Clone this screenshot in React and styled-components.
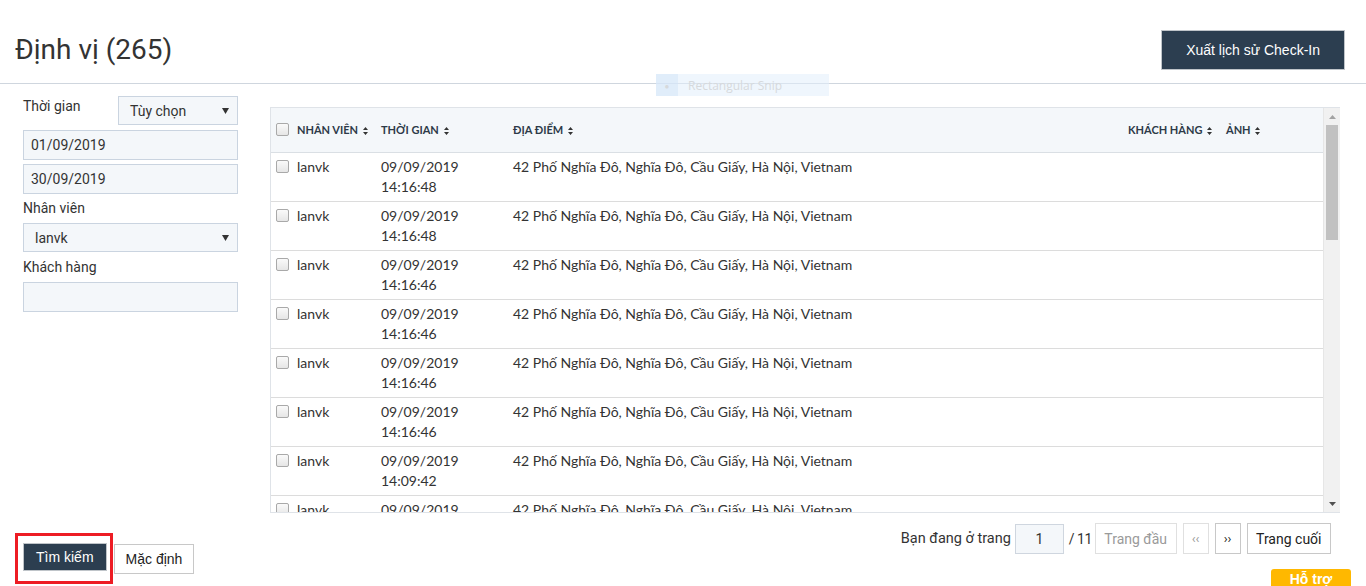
import React from "react";
import styled, { createGlobalStyle } from "styled-components";

const GlobalStyle = createGlobalStyle`
  * { box-sizing: border-box; }
  body {
    margin: 0;
    background: #fff;
    font-family: Roboto, "Liberation Sans", sans-serif;
    color: #333;
    overflow: hidden;
  }
`;

const rows = [
  "14:16:48",
  "14:16:48",
  "14:16:46",
  "14:16:46",
  "14:16:46",
  "14:16:46",
  "14:09:42",
  "14:09:40",
];

const SortIcon = () => (
  <SortSvg width="5" height="8" viewBox="0 0 5 8">
    <path d="M2.5 0 L5 3 L0 3 Z M2.5 8 L5 5 L0 5 Z" fill="#333" />
  </SortSvg>
);

const Caret = () => (
  <CaretSvg width="7" height="6" viewBox="0 0 7 6">
    <path d="M0 0 L7 0 L3.5 6 Z" fill="#333" />
  </CaretSvg>
);

const App = () => {
  return (
    <Page>
      <GlobalStyle />
      <Header>
        <Title>Định vị (265)</Title>
        <DarkButton $big>Xuất lịch sử Check-In</DarkButton>
      </Header>
      <SnipOverlay>
        <SnipDot>●</SnipDot>
        <span>Rectangular Snip</span>
      </SnipOverlay>

      <Body>
        <Sidebar>
          <Filters>
            <TimeRow>
              <Label>Thời gian</Label>
              <Select $width="120px" $pad="11px">
                Tùy chọn
                <Caret />
              </Select>
            </TimeRow>
            <Input>01/09/2019</Input>
            <Input>30/09/2019</Input>
            <Label>Nhân viên</Label>
            <Select $pad="11px">
              lanvk
              <Caret />
            </Select>
            <Label>Khách hàng</Label>
            <Input />
          </Filters>
          <Actions>
            <Highlight>
              <DarkButton>Tìm kiếm</DarkButton>
            </Highlight>
            <LightButton>Mặc định</LightButton>
          </Actions>
        </Sidebar>

        <Main>
          <TableBox>
            <TableScroll>
              <Table>
                <colgroup>
                  <col style={{ width: 26 }} />
                  <col style={{ width: 84 }} />
                  <col style={{ width: 132 }} />
                  <col style={{ width: 615 }} />
                  <col style={{ width: 98 }} />
                  <col />
                </colgroup>
                <thead>
                  <tr>
                    <Th>
                      <Check />
                    </Th>
                    <Th>NHÂN VIÊN <SortIcon /></Th>
                    <Th>THỜI GIAN <SortIcon /></Th>
                    <Th>ĐỊA ĐIỂM <SortIcon /></Th>
                    <Th>KHÁCH HÀNG <SortIcon /></Th>
                    <Th>ẢNH <SortIcon /></Th>
                  </tr>
                </thead>
                <tbody>
                  {rows.map((t, i) => (
                    <tr key={i}>
                      <Td>
                        <Check />
                      </Td>
                      <Td>lanvk</Td>
                      <Td>
                        09/09/2019
                        <br />
                        {t}
                      </Td>
                      <Td>42 Phố Nghĩa Đô, Nghĩa Đô, Cầu Giấy, Hà Nội, Vietnam</Td>
                      <Td />
                      <Td />
                    </tr>
                  ))}
                </tbody>
              </Table>
            </TableScroll>
            <Scrollbar>
              <ScrollArrow>
                <svg width="7" height="4" viewBox="0 0 7 4">
                  <path d="M3.5 0 L7 4 L0 4 Z" fill="#a3a3a3" />
                </svg>
              </ScrollArrow>
              <ScrollTrack>
                <Thumb />
              </ScrollTrack>
              <ScrollArrow>
                <svg width="7" height="4" viewBox="0 0 7 4">
                  <path d="M0 0 L7 0 L3.5 4 Z" fill="#505050" />
                </svg>
              </ScrollArrow>
            </Scrollbar>
          </TableBox>

          <Pager>
            <PagerText>Bạn đang ở trang</PagerText>
            <PageInput>1</PageInput>
            <PagerText $small>/ 11</PagerText>
            <PageButton $disabled $first>Trang đầu</PageButton>
            <PageButton $disabled $small>‹‹</PageButton>
            <PageButton $small>››</PageButton>
            <PageButton>Trang cuối</PageButton>
          </Pager>
        </Main>
      </Body>

      <Support>Hỗ trợ</Support>
    </Page>
  );
};

const Page = styled.div`
  position: relative;
  width: 1366px;
  height: 586px;
  overflow: hidden;
`;

const Header = styled.header`
  height: 84px;
  display: flex;
  align-items: flex-start;
  justify-content: space-between;
  padding: 0 21px 0 15px;
  border-bottom: 1px solid #cfd6de;
`;

const Title = styled.h1`
  margin: 33px 0 0;
  font-family: Roboto, sans-serif;
  font-weight: 400;
  font-size: 28px;
  line-height: 34px;
  color: #333;
`;

const DarkButton = styled.button`
  background: #2c3e50;
  color: #fff;
  border: 1px solid #bfc4c9;
  font-family: "Liberation Sans", Arial, sans-serif;
  font-size: 14px;
  height: ${(p) => (p.$big ? "40px" : "28px")};
  padding: ${(p) => (p.$big ? "0 24px" : "0 12px")};
  border-radius: 0;
  margin-top: ${(p) => (p.$big ? "30px" : "0")};
`;

const LightButton = styled.button`
  background: #fff;
  color: #222;
  border: 1px solid #c8c8c8;
  font-family: "Liberation Sans", Arial, sans-serif;
  font-size: 14px;
  height: 30px;
  padding: 0 11px;
  border-radius: 0;
`;

const SnipOverlay = styled.div`
  position: absolute;
  left: 656px;
  top: 74px;
  width: 173px;
  height: 22px;
  background: rgba(225, 238, 252, 0.55);
  display: flex;
  align-items: center;
  font-family: "Open Sans", sans-serif;
  font-size: 12px;
  color: #d6d9dc;
`;

const SnipDot = styled.span`
  width: 22px;
  height: 22px;
  display: flex;
  align-items: center;
  justify-content: center;
  background: rgba(210, 228, 248, 0.5);
  font-size: 8px;
  margin-right: 10px;
`;

const Body = styled.div`
  display: flex;
  padding-top: 12px;
`;

const Sidebar = styled.aside`
  width: 215px;
  margin-left: 23px;
  height: 488px;
  display: flex;
  flex-direction: column;
  justify-content: space-between;
`;

const Filters = styled.div`
  display: flex;
  flex-direction: column;
  gap: 5px;
`;

const TimeRow = styled.div`
  display: flex;
  justify-content: space-between;
  align-items: flex-start;
`;

const Label = styled.div`
  font-size: 14px;
  line-height: 20px;
  color: #333;
`;

const Field = styled.div`
  height: 30px;
  width: 100%;
  background: #f4f7fa;
  border: 1px solid #cad4e0;
  font-size: 14px;
  display: flex;
  align-items: center;
  color: #333;
`;

const Input = styled(Field)`
  padding-left: 7px;
  margin-bottom: -1px;
`;

const Select = styled(Field)`
  height: 29px;
  width: ${(p) => p.$width || "100%"};
  padding: 0 8px 0 ${(p) => p.$pad};
  justify-content: space-between;
`;

const CaretSvg = styled.svg`
  display: block;
`;

const Actions = styled.div`
  display: flex;
  align-items: center;
  margin-left: -8px;
  gap: 1px;
`;

const Highlight = styled.div`
  border: 3px solid #ed1c24;
  padding: 7px 3px 10px 5px;
  display: flex;
`;

const Main = styled.div`
  margin-left: 32px;
  width: 1070px;
  padding-top: 11px;
`;

const TableBox = styled.div`
  display: flex;
  height: 406px;
  border: 1px solid #dfe3e8;
  border-right: none;
  overflow: hidden;
`;

const TableScroll = styled.div`
  flex: 1;
  overflow: hidden;
`;

const Table = styled.table`
  width: 100%;
  table-layout: fixed;
  border-collapse: collapse;
  font-family: Lato, sans-serif;
`;

const Th = styled.th`
  height: 44px;
  background: #f4f7fa;
  text-align: left;
  font-size: 11px;
  font-weight: 700;
  color: #2d3a48;
  border-bottom: 1px solid #dadfe4;
  padding: 0;
  white-space: nowrap;
  &:first-child {
    padding-left: 5px;
  }
`;

const Td = styled.td`
  vertical-align: top;
  font-size: 14px;
  line-height: 20px;
  color: #333;
  padding: 4px 0;
  border-bottom: 1px solid #dcdcdc;
  &:first-child {
    padding-left: 5px;
    padding-top: 7px;
  }
`;

const Check = styled.span`
  display: block;
  width: 13px;
  height: 13px;
  border: 1px solid #a9a9a9;
  border-radius: 2px;
  background: linear-gradient(#fafafa, #e6e6e6);
`;

const SortSvg = styled.svg`
  margin-left: 2px;
  vertical-align: -1px;
`;

const Scrollbar = styled.div`
  width: 17px;
  background: #f1f1f1;
  border-left: 1px solid #e6e6e6;
  display: flex;
  flex-direction: column;
`;

const ScrollArrow = styled.div`
  height: 17px;
  display: flex;
  align-items: center;
  justify-content: center;
`;

const ScrollTrack = styled.div`
  flex: 1;
  padding: 0 2px;
`;

const Thumb = styled.div`
  height: 115px;
  background: #c1c1c1;
`;

const Pager = styled.div`
  display: flex;
  justify-content: flex-end;
  align-items: center;
  margin-top: 10px;
  padding-right: 9px;
`;

const PagerText = styled.span`
  font-size: ${(p) => (p.$small ? "14px" : "14.5px")};
  letter-spacing: ${(p) => (p.$small ? "-0.5px" : "0")};
  color: #333;
`;

const PageInput = styled.div`
  width: 49px;
  height: 30px;
  background: #f4f7fa;
  border: 1px solid #cfd6df;
  display: flex;
  align-items: center;
  justify-content: center;
  font-size: 14px;
  margin: 0 5px 0 4px;
`;

const PageButton = styled.button`
  height: 31px;
  background: #fff;
  border: 1px solid ${(p) => (p.$disabled ? "#e0e0e0" : "#c8c8c8")};
  color: ${(p) => (p.$disabled ? "#9a9a9a" : "#222")};
  font-family: Roboto, sans-serif;
  font-size: ${(p) => (p.$small ? "13px" : "14px")};
  padding: 0 ${(p) => (p.$small ? "0" : "8.5px")};
  width: ${(p) => (p.$small ? "26px" : "auto")};
  margin-left: ${(p) => (p.$first ? "3px" : "6px")};
  border-radius: 0;
`;

const Support = styled.div`
  position: absolute;
  left: 1271px;
  top: 569px;
  width: 80px;
  height: 24px;
  background: #ffb800;
  border-radius: 3px 3px 0 0;
  color: #fff;
  font-family: "Liberation Sans", Arial, sans-serif;
  font-weight: 700;
  font-size: 14px;
  text-align: center;
  padding-top: 2px;
`;

export default App;
